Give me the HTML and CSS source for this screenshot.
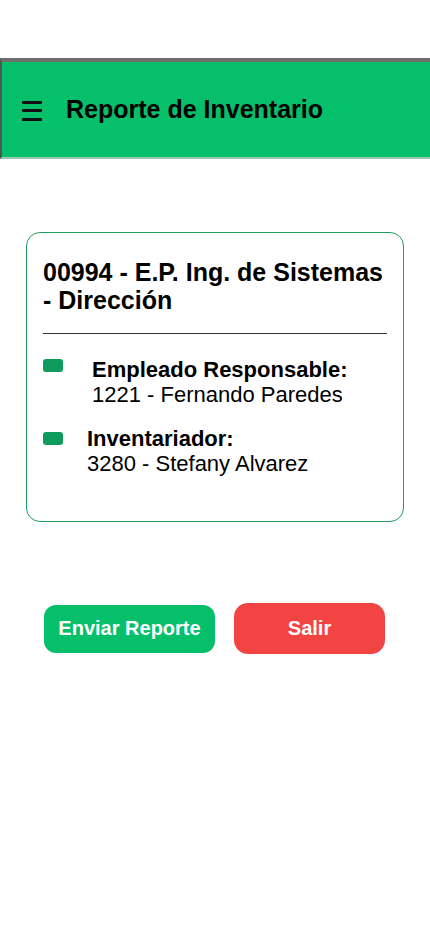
FILE: index.html
```html
<!DOCTYPE html>
<html lang="es">
<head>
<meta charset="utf-8">
<link rel="stylesheet" href="styles.css">
</head>
<body>
<div class="spacer"></div>
<header class="topbar">
  <svg class="menu" width="22" height="22" viewBox="0 0 22 22">
    <rect x="0" y="1" width="20" height="3" rx="1" fill="#111"/>
    <rect x="0" y="9" width="20" height="3" rx="1" fill="#111"/>
    <rect x="0" y="18" width="20" height="3" rx="1" fill="#111"/>
  </svg>
  <h1 class="title">Reporte de Inventario</h1>
</header>
<main class="content">
  <section class="card">
    <h2 class="card-title">00994 - E.P. Ing. de Sistemas - Dirección</h2>
    <hr class="divider">
    <div class="row row-a">
      <span class="tag"></span>
      <div class="info">
        <div class="label">Empleado Responsable:</div>
        <div class="value">1221 - Fernando Paredes</div>
      </div>
    </div>
    <div class="row row-b">
      <span class="tag"></span>
      <div class="info">
        <div class="label">Inventariador:</div>
        <div class="value">3280 - Stefany Alvarez</div>
      </div>
    </div>
  </section>
  <div class="actions">
    <button class="btn btn-send">Enviar Reporte</button>
    <button class="btn btn-exit">Salir</button>
  </div>
</main>
</body>
</html>
```
FILE: styles.css
```css
* { box-sizing: border-box; }
html, body { margin: 0; padding: 0; background: #fff; }
body { font-family: "Liberation Sans", Arial, sans-serif; color: #000; width: 430px; }
.spacer { height: 58px; }
.topbar {
  height: 101px;
  background: #06bf6b;
  border-top: 4px solid #6f6f6f;
  border-left: 2px solid #4a5a52;
  border-bottom: 2px solid #9cc6b4;
  display: flex;
  align-items: center;
  padding-left: 20px;
}
.menu { display: block; margin-right: 22px; margin-top: 2px; }
.title { margin: 0; font-size: 25px; font-weight: bold; color: #000; }
.content { padding: 73px 26px 0 26px; }
.card {
  border: 1px solid #1f9c63;
  border-radius: 14px;
  height: 290px;
  padding: 25px 16px 0 16px;
}
.card-title { margin: 0; font-size: 25px; line-height: 28px; font-weight: bold; }
.divider { border: 0; border-top: 1px solid #333; margin: 19px 0 0 0; }
.row { display: flex; align-items: flex-start; }
.row-a { margin-top: 23px; }
.row-b { margin-top: 19px; }
.tag { width: 20px; height: 13px; background: #0e9b5b; border-radius: 3px; margin-top: 2px; flex: none; }
.row-a .tag { margin-right: 29px; }
.row-b .tag { margin-right: 24px; margin-top: 6px; }
.label { font-size: 22px; font-weight: bold; line-height: 25px; }
.value { font-size: 22px; line-height: 25px; }
.actions { display: flex; align-items: center; gap: 19px; padding-left: 18px; margin-top: 81px; }
.btn {
  border: 0; color: #fff; font-family: "Liberation Sans", Arial, sans-serif;
  font-weight: bold; font-size: 20px; cursor: pointer; padding: 0;
}
.btn-send { width: 171px; height: 48px; background: #06bf6b; border-radius: 12px; }
.btn-exit { width: 151px; height: 51px; background: #f34444; border-radius: 14px; }
```
